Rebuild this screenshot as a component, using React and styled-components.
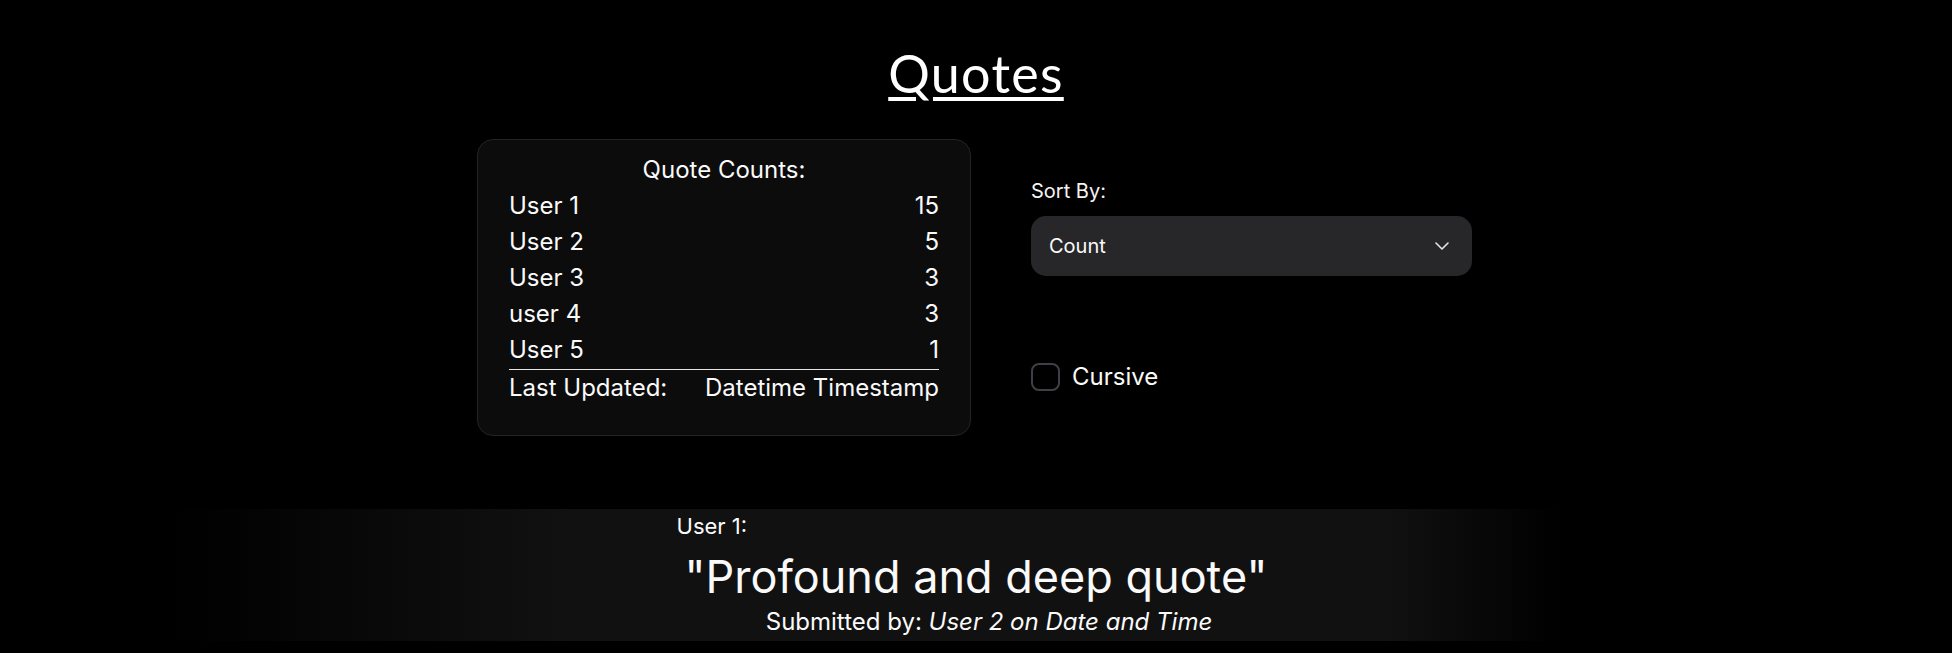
import React from "react";
import styled, { createGlobalStyle } from "styled-components";

const Global = createGlobalStyle`
  html, body { margin: 0; padding: 0; background: #000; }
  body { font-family: Inter, "Noto Sans", sans-serif; color: #fafafa; }
`;

const Page = styled.div`
  display: flex;
  flex-direction: column;
  align-items: center;
  min-height: 653px;
`;

const Title = styled.h1`
  margin: 42px 0 0;
  font-family: Lato, "Open Sans", sans-serif;
  font-weight: 400;
  font-size: 52px;
  line-height: 62px;
  letter-spacing: 1.3px;
  text-decoration: underline;
  text-decoration-thickness: 4px;
  text-underline-offset: 4px;
  color: #fff;
`;

const TopRow = styled.div`
  display: flex;
  justify-content: center;
  align-items: flex-start;
  gap: 60px;
  margin-top: 35px;
  margin-left: -3px;
`;

const Card = styled.section`
  box-sizing: border-box;
  width: 494px;
  padding: 12px 31px 30px;
  background: #0c0c0c;
  border: 1px solid #232323;
  border-radius: 16px;
`;

const CardTitle = styled.div`
  text-align: center;
  font-size: 24px;
  line-height: 36px;
`;

const CountRow = styled.div`
  display: flex;
  justify-content: space-between;
  font-size: 24px;
  border-top: ${(p) => (p.$divider ? "1px solid #e5e5e5" : "none")};
  margin-top: ${(p) => (p.$divider ? "1px" : "0")};
  line-height: ${(p) => (p.$divider ? "35px" : "36px")};
`;

const Side = styled.div`
  width: 441px;
  display: flex;
  flex-direction: column;
  padding-top: 37px;
`;

const Label = styled.div`
  font-size: 20px;
  line-height: 30px;
  margin-bottom: 10px;
  color: #f4f4f5;
`;

const SelectBox = styled.button`
  box-sizing: border-box;
  width: 100%;
  height: 60px;
  display: flex;
  align-items: center;
  justify-content: space-between;
  padding: 0 23px 0 18px;
  background: #27272a;
  border: none;
  border-radius: 15px;
  color: #fafafa;
  font-family: Inter, sans-serif;
  font-size: 20px;
`;

const CheckRow = styled.label`
  display: flex;
  align-items: center;
  gap: 12px;
  margin-top: 83px;
  font-size: 24px;
  line-height: 36px;
`;

const Box = styled.span`
  box-sizing: border-box;
  width: 29px;
  height: 28px;
  border: 2px solid #3f3f46;
  border-radius: 8px;
`;

const Band = styled.section`
  align-self: stretch;
  margin-top: 73px;
  height: 132px;
  box-sizing: border-box;
  padding: 4px 0 0;
  display: flex;
  justify-content: center;
  background: linear-gradient(
    90deg,
    rgba(17, 17, 17, 0) 9%,
    #111 29%,
    #111 71%,
    rgba(17, 17, 17, 0) 80%
  );
`;

const QuoteBlock = styled.div`
  display: flex;
  flex-direction: column;
`;

const Author = styled.div`
  font-size: 22px;
  line-height: 26px;
  text-align: left;
  margin-left: -8px;
`;

const QuoteText = styled.div`
  font-size: 45px;
  line-height: 56px;
  margin-top: 10px;
  text-align: center;
`;

const Submitted = styled.div`
  font-size: 24px;
  line-height: 30px;
  margin-top: 2px;
  padding-left: 26px;
  text-align: center;
  em { font-style: italic; }
`;

const counts = [
  ["User 1", 15],
  ["User 2", 5],
  ["User 3", 3],
  ["user 4", 3],
  ["User 5", 1],
];

export default function App() {
  return (
    <>
      <Global />
      <Page>
        <Title>Quotes</Title>
        <TopRow>
          <Card>
            <CardTitle>Quote Counts:</CardTitle>
            {counts.map(([name, n]) => (
              <CountRow key={name}>
                <span>{name}</span>
                <span>{n}</span>
              </CountRow>
            ))}
            <CountRow $divider>
              <span>Last Updated:</span>
              <span>Datetime Timestamp</span>
            </CountRow>
          </Card>
          <Side>
            <Label>Sort By:</Label>
            <SelectBox>
              <span>Count</span>
              <svg width="14" height="8" viewBox="0 0 14 8" fill="none">
                <polyline points="1,1 7,7 13,1" stroke="#e4e4e7" strokeWidth="1.6" strokeLinecap="round" strokeLinejoin="round" />
              </svg>
            </SelectBox>
            <CheckRow>
              <Box />
              <span>Cursive</span>
            </CheckRow>
          </Side>
        </TopRow>
        <Band>
          <QuoteBlock>
            <Author>User 1:</Author>
            <QuoteText>"Profound and deep quote"</QuoteText>
            <Submitted>
              Submitted by: <em>User 2 on Date and Time</em>
            </Submitted>
          </QuoteBlock>
        </Band>
      </Page>
    </>
  );
}
